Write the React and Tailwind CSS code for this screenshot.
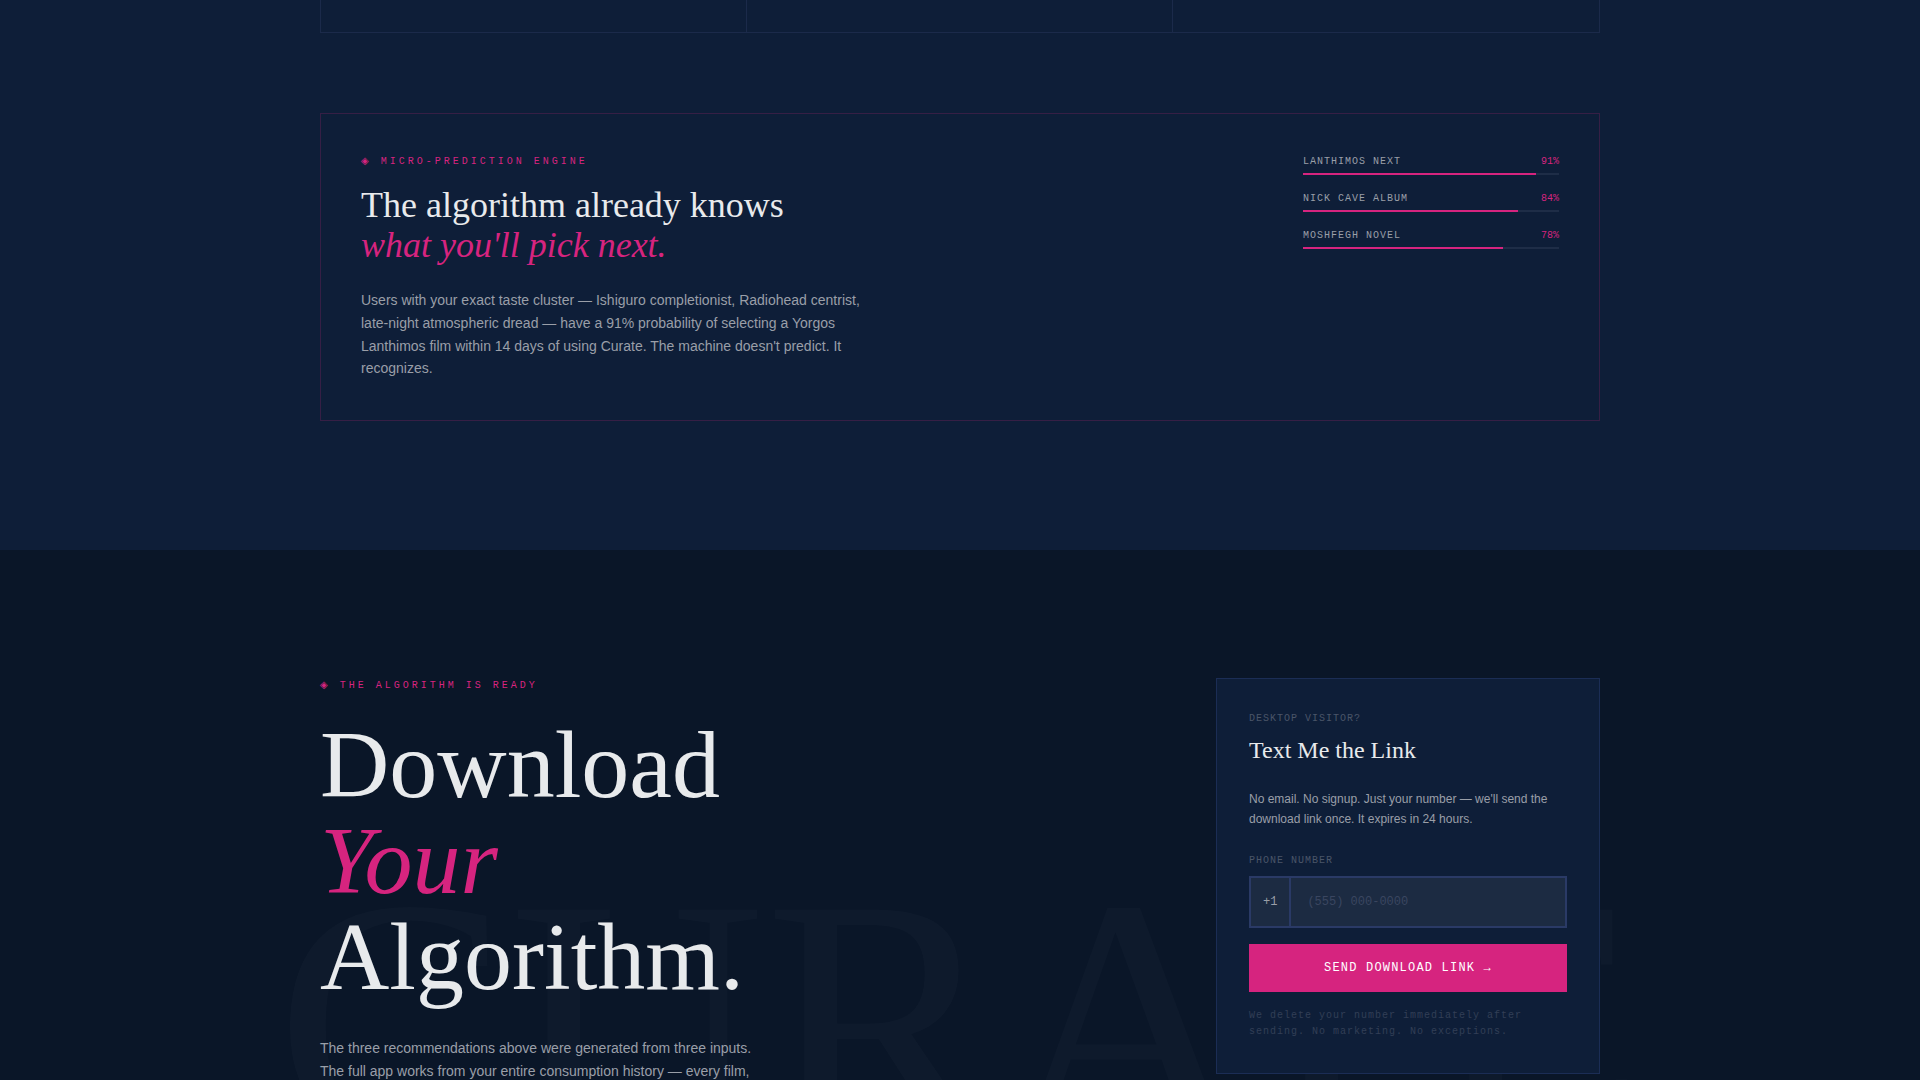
const MONO = "font-['Liberation_Mono','DejaVu_Sans',monospace]";

const predictions = [
  { label: "LANTHIMOS NEXT", value: 91 },
  { label: "NICK CAVE ALBUM", value: 84 },
  { label: "MOSHFEGH NOVEL", value: 78 },
];

function Eyebrow({ children, className }) {
  return (
    <p className={`${MONO} text-[10px] leading-[15px] tracking-[0.3em] text-[#d6247f] uppercase ${className}`}>
      ◈ {children}
    </p>
  );
}

function Prediction({ label, value }) {
  return (
    <li>
      <div className={`${MONO} mb-1 flex justify-between text-[10px] leading-[15px]`}>
        <span className="tracking-widest text-[#9a9fa8]">{label}</span>
        <span className="text-[#d6247f]">{value}%</span>
      </div>
      <div className="h-0.5 bg-[#1e2d47]">
        <div className="h-full bg-[#d6247f]" style={{ width: `${value}%` }} />
      </div>
    </li>
  );
}

function PredictionSection() {
  return (
    <section className="shrink-0 bg-[#0e1e38] pb-32">
      <div className="mx-auto max-w-7xl">
        <div className="mb-20 grid h-[33px] grid-cols-3 divide-x divide-[#1b2a4a] border border-t-0 border-[#1b2a4a]">
          <div />
          <div />
          <div />
        </div>
        <div className="flex justify-between border border-[#d6247f]/20 p-10">
          <div>
            <Eyebrow className="mb-4">Micro-Prediction Engine</Eyebrow>
            <h2 className="mb-6 font-['Liberation_Serif',serif] text-4xl leading-10 text-[#e8eaec]">
              The algorithm already knows
              <br />
              <em className="text-[#d6247f]">what you'll pick next.</em>
            </h2>
            <p className="max-w-lg text-sm leading-relaxed text-[#9a9fa8]">
              Users with your exact taste cluster — Ishiguro completionist, Radiohead centrist, late-night
              atmospheric dread — have a 91% probability of selecting a Yorgos Lanthimos film within 14 days of
              using Curate. The machine doesn't predict. It recognizes.
            </p>
          </div>
          <ul className="w-64 space-y-4">
            {predictions.map((p) => (
              <Prediction key={p.label} {...p} />
            ))}
          </ul>
        </div>
      </div>
    </section>
  );
}

function LinkForm() {
  return (
    <form
      className="w-96 self-start border border-[#1b2d55] bg-[#0e1e38] p-8"
      onSubmit={(e) => e.preventDefault()}
    >
      <p className={`${MONO} mb-2 text-[10px] leading-[15px] tracking-widest text-[#4a5568]`}>DESKTOP VISITOR?</p>
      <h2 className="mb-6 font-['Liberation_Serif',serif] text-2xl text-[#e8eaec]">Text Me the Link</h2>
      <p className="mb-6 text-xs leading-relaxed text-[#9a9fa8]">
        No email. No signup. Just your number — we'll send the download link once. It expires in 24 hours.
      </p>
      <label
        htmlFor="phone"
        className={`${MONO} mb-2 block text-[10px] leading-[15px] tracking-widest text-[#4a5568]`}
      >
        PHONE NUMBER
      </label>
      <div className={`${MONO} mb-4 flex border-2 border-[#2a3a66] bg-[#1c2b42] text-xs`}>
        <span className="flex items-center border-r-2 border-[#2a3a66] px-3 text-[#9a9fa8]">+1</span>
        <input
          id="phone"
          type="tel"
          placeholder="(555) 000-0000"
          className="min-w-0 flex-1 bg-transparent p-4 text-[#e8eaec] outline-none placeholder:text-[#3a4660]"
        />
      </div>
      <button
        type="submit"
        className={`${MONO} mb-4 block w-full bg-[#d6247f] py-4 text-xs tracking-widest text-white`}
      >
        SEND DOWNLOAD LINK →
      </button>
      <p className={`${MONO} text-[10px] leading-relaxed tracking-widest text-[#323e56]`}>
        We delete your number immediately after sending. No marketing. No exceptions.
      </p>
    </form>
  );
}

function DownloadSection() {
  return (
    <section className="relative flex-1 overflow-hidden border-t border-[#0e1e38] bg-[#0a1628] pt-32">
      <div
        aria-hidden="true"
        className="pointer-events-none absolute inset-x-0 top-[295px] text-center font-['Liberation_Serif',serif] text-[352px] leading-none text-white/[0.02] select-none"
      >
        CURATE
      </div>
      <div className="relative mx-auto flex max-w-7xl justify-between">
        <div>
          <Eyebrow className="mb-6">The Algorithm Is Ready</Eyebrow>
          <h1 className="mb-8 font-['Liberation_Serif',serif] text-8xl text-[#e8eaec]">
            Download
            <br />
            <em className="text-[#d6247f]">Your</em>
            <br />
            Algorithm.
          </h1>
          <p className="max-w-md text-sm leading-relaxed text-[#9a9fa8]">
            The three recommendations above were generated from three inputs. The full app works from your entire
            consumption history — every film,
          </p>
        </div>
        <LinkForm />
      </div>
    </section>
  );
}

export default function App() {
  return (
    <main className="flex h-screen flex-col overflow-hidden bg-[#0a1628] font-['Liberation_Sans',sans-serif]">
      <PredictionSection />
      <DownloadSection />
    </main>
  );
}
